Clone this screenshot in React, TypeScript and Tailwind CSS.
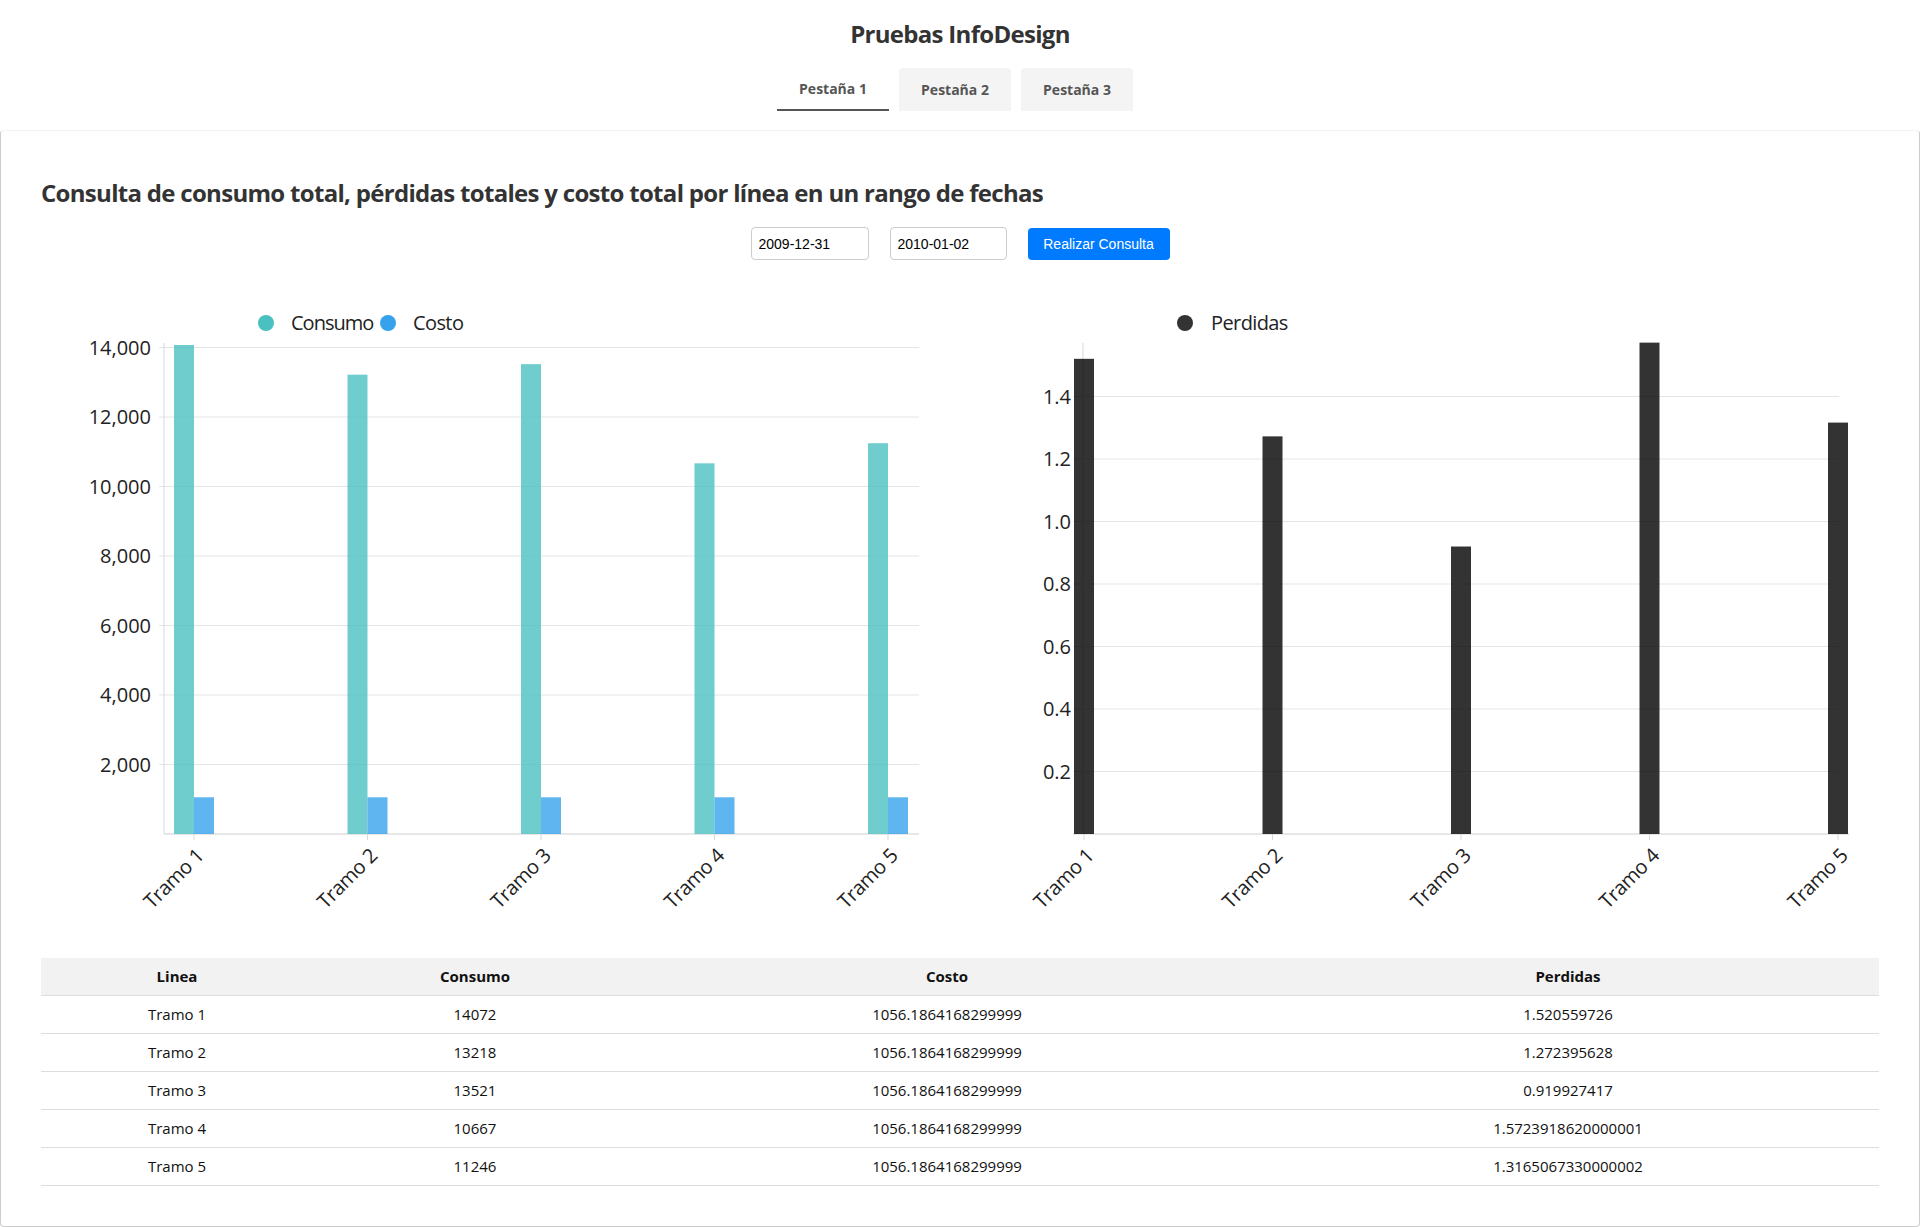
import React from "react";

const tramos = ["Tramo 1", "Tramo 2", "Tramo 3", "Tramo 4", "Tramo 5"];
const consumo = [14072, 13218, 13521, 10667, 11246];
const costo = [1056.1864168299999, 1056.1864168299999, 1056.1864168299999, 1056.1864168299999, 1056.1864168299999];
const perdidas = ["1.520559726", "1.272395628", "0.919927417", "1.5723918620000001", "1.3165067330000002"];

const BASE = 534;

function ConsumoChart() {
  const ys = (v: number) => BASE - v * 0.03475;
  const centers = [153, 326.5, 500, 673.5, 847];
  const ticks = [2000, 4000, 6000, 8000, 10000, 12000, 14000];
  return (
    <svg width={918} height={630} className="block shrink-0">
      <circle cx={225} cy={23} r={8} fill="#4bc0c0" />
      <text x={250} y={30} fontSize={20} fill="#222" letterSpacing={-1}>Consumo</text>
      <circle cx={347} cy={23} r={8} fill="#36a2eb" />
      <text x={372} y={30} fontSize={20} fill="#222" letterSpacing={-0.6}>Costo</text>

      {ticks.map((t) => (
        <g key={t}>
          <line x1={118} x2={878} y1={ys(t)} y2={ys(t)} stroke="#e5e5e5" />
          <text x={110} y={ys(t) + 7} fontSize={20} fill="#222" textAnchor="end">
            {t.toLocaleString("en-US")}
          </text>
        </g>
      ))}
      <line x1={123} x2={123} y1={43} y2={BASE} stroke="#d9d9d9" />
      <line x1={123} x2={878} y1={BASE} y2={BASE} stroke="#cfcfcf" />

      {centers.map((c, i) => (
        <g key={i}>
          <rect x={c - 20} y={ys(consumo[i])} width={20} height={consumo[i] * 0.03475} fill="rgba(75,192,192,0.8)" />
          <rect x={c} y={ys(costo[i])} width={20} height={costo[i] * 0.03475} fill="rgba(54,162,235,0.8)" />
          <line x1={c} x2={c} y1={BASE} y2={BASE + 6} stroke="#d9d9d9" />
          <text transform={`translate(${c + 11} 557) rotate(-45)`} fontSize={20} fill="#222" textAnchor="end" letterSpacing={-0.4}>
            {tramos[i]}
          </text>
        </g>
      ))}
    </svg>
  );
}

function PerdidasChart() {
  const ys = (v: number) => BASE - v * 312.5;
  const centers = [123, 311.5, 500, 688.5, 877];
  const ticks = ["0.2", "0.4", "0.6", "0.8", "1.0", "1.2", "1.4"];
  return (
    <svg width={918} height={630} className="block shrink-0">
      <circle cx={224} cy={23} r={8} fill="#333" />
      <text x={250} y={30} fontSize={20} fill="#222" letterSpacing={-0.6}>Perdidas</text>

      {ticks.map((t) => (
        <g key={t}>
          <line x1={112} x2={878} y1={ys(+t)} y2={ys(+t)} stroke="#e5e5e5" />
          <text x={110} y={ys(+t) + 7} fontSize={20} fill="#222" textAnchor="end">
            {t}
          </text>
        </g>
      ))}
      <line x1={122} x2={122} y1={43} y2={BASE} stroke="#d9d9d9" />
      <line x1={112} x2={888} y1={BASE} y2={BASE} stroke="#cfcfcf" />

      {centers.map((c, i) => (
        <g key={i}>
          <rect x={c - 10} y={ys(+perdidas[i])} width={20} height={+perdidas[i] * 312.5} fill="rgba(0,0,0,0.8)" />
          <line x1={c} x2={c} y1={BASE} y2={BASE + 6} stroke="#d9d9d9" />
          <text transform={`translate(${c + 11} 557) rotate(-45)`} fontSize={20} fill="#222" textAnchor="end" letterSpacing={-0.4}>
            {tramos[i]}
          </text>
        </g>
      ))}
    </svg>
  );
}

export default function App() {
  return (
    <div className="flex min-h-[1227px] flex-col bg-white font-['Open_Sans',sans-serif] text-[#333]">
      <h1 className="mt-[18px] text-center text-2xl leading-8 font-bold tracking-[-0.7px]">Pruebas InfoDesign</h1>

      <div className="mt-[18px] flex justify-center gap-[10px] pr-[10px]">
        <button type="button" className="h-[43px] w-[112px] border-b-2 border-[#555] text-sm font-bold text-[#555]">
          Pestaña 1
        </button>
        <button type="button" className="h-[43px] w-[112px] rounded-t bg-[#f4f4f4] text-sm font-bold text-[#555]">
          Pestaña 2
        </button>
        <button type="button" className="h-[43px] w-[112px] rounded-t bg-[#f4f4f4] text-sm font-bold text-[#555]">
          Pestaña 3
        </button>
      </div>

      <div className="mt-[19px] flex flex-1 flex-col rounded border border-[#cccccc] border-t-[#f2f2f2] px-10 pt-[46px] pb-10">
        <h2 className="text-2xl leading-8 font-bold tracking-[-0.7px]">
          Consulta de consumo total, pérdidas totales y costo total por línea en un rango de fechas
        </h2>

        <div className="mt-[18px] flex items-center justify-center gap-[21px] font-['Liberation_Sans',Arial,sans-serif] text-sm">
          <input
            readOnly
            value="2009-12-31"
            className="h-[33px] w-[118px] rounded border border-[#ccc] px-[7px] text-black"
          />
          <input
            readOnly
            value="2010-01-02"
            className="h-[33px] w-[117px] rounded border border-[#ccc] px-[7px] text-black"
          />
          <button type="button" className="h-[32px] w-[142px] rounded bg-[#007bff] text-white">
            Realizar Consulta
          </button>
        </div>

        <div className="mt-10 flex justify-between">
          <ConsumoChart />
          <PerdidasChart />
        </div>

        <table className="mt-[28px] w-full table-fixed border-collapse text-[15px] text-[#111]">
          <colgroup>
            <col className="w-[272px]" />
            <col className="w-[324px]" />
            <col className="w-[620px]" />
            <col />
          </colgroup>
          <thead>
            <tr className="h-[37px] border-b border-[#ddd] bg-[#f2f2f2]">
              <th className="font-bold">Linea</th>
              <th className="font-bold">Consumo</th>
              <th className="font-bold">Costo</th>
              <th className="font-bold">Perdidas</th>
            </tr>
          </thead>
          <tbody>
            {tramos.map((t, i) => (
              <tr key={t} className="h-[38px] border-b border-[#ddd] text-center">
                <td>{t}</td>
                <td>{consumo[i]}</td>
                <td>{costo[i]}</td>
                <td>{perdidas[i]}</td>
              </tr>
            ))}
          </tbody>
        </table>
      </div>
    </div>
  );
}
